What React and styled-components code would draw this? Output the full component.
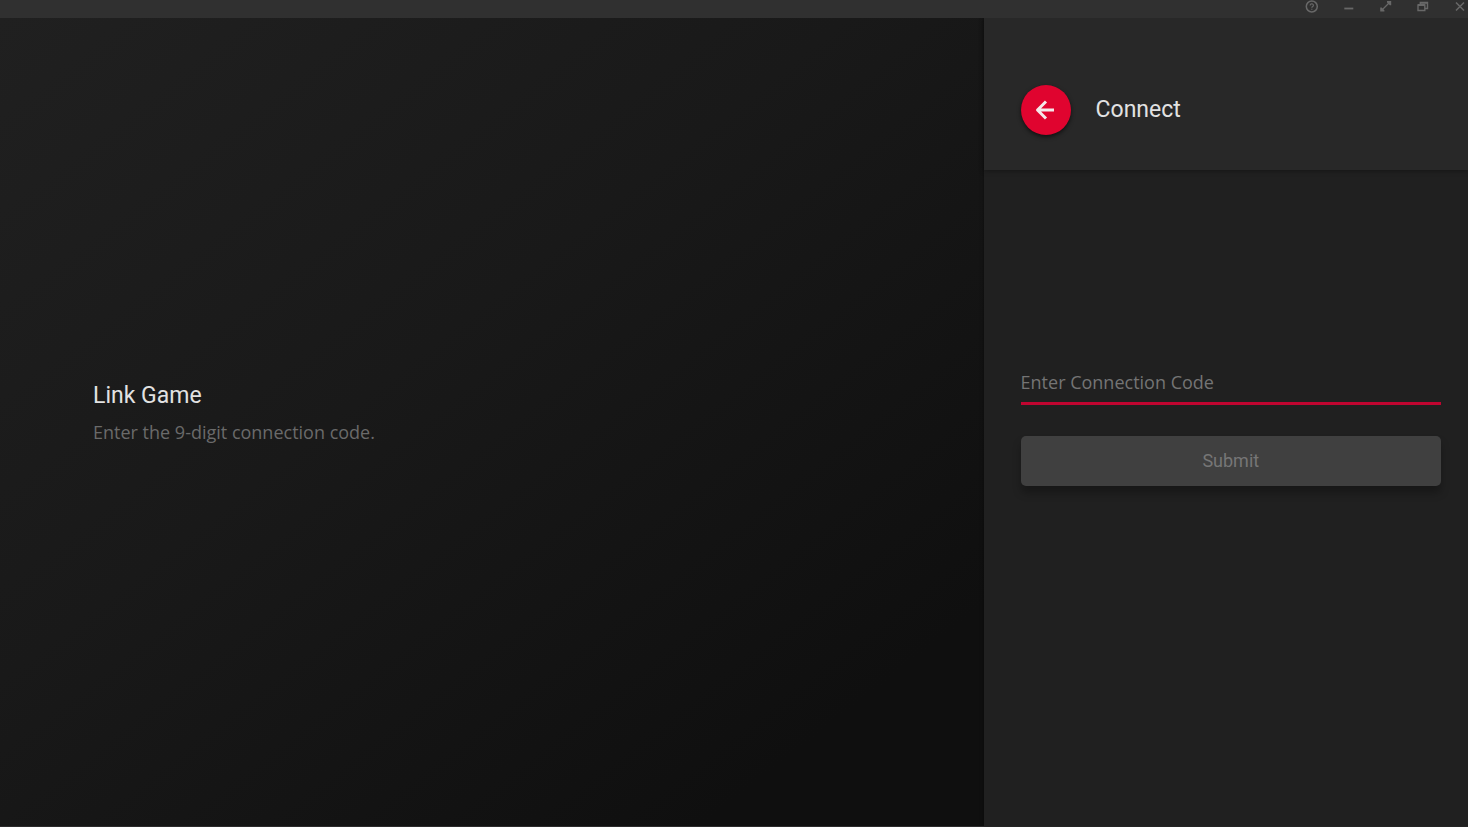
import React, { useState } from "react";
import styled, { createGlobalStyle } from "styled-components";

const GlobalStyle = createGlobalStyle`
  *, *::before, *::after { box-sizing: border-box; }
  body {
    margin: 0;
    background: #202020;
    color: #e2e2e2;
    font-family: "Open Sans", "Noto Sans", sans-serif;
  }
`;

const Page = styled.div`
  display: flex;
  flex-direction: column;
  min-height: 100vh;
  border-bottom: 1px solid #2c2b2c;
`;

const TitleBar = styled.header`
  position: relative;
  z-index: 1;
  display: flex;
  justify-content: flex-end;
  gap: 23px;
  height: 18px;
  padding-right: 1px;
  background: #303030;
`;

const WindowButton = styled.button`
  display: flex;
  align-items: center;
  justify-content: center;
  width: 14px;
  height: 13px;
  padding: 0;
  border: 0;
  background: none;
  color: #686868;
  cursor: pointer;
`;

const Columns = styled.div`
  display: flex;
  flex: 1;
`;

const Intro = styled.main`
  display: flex;
  flex: 1;
  flex-direction: column;
  justify-content: center;
  gap: 8px;
  padding: 0 24px 20px 93px;
  background: linear-gradient(142deg, #202020 0%, #191919 42%, #0f0f0f 86%, #0f0f0f 100%);
`;

const Heading = styled.h1`
  margin: 0;
  font: 400 23px/32px Roboto, sans-serif;
  color: #e2e2e2;
`;

const Description = styled.p`
  margin: 0;
  font-size: 18px;
  line-height: 24px;
  color: #6a6a6a;
`;

const Sidebar = styled.aside`
  display: flex;
  flex-direction: column;
  width: 33%;
  background: #202020;
  box-shadow: 0 0 4px rgba(0, 0, 0, 0.4);
`;

const SidebarHeader = styled.div`
  display: flex;
  align-items: center;
  gap: 25px;
  height: 152px;
  padding: 32px 37px 0;
  background: #282828;
  box-shadow: 0 1px 5px rgba(0, 0, 0, 0.35);
`;

const BackButton = styled.button`
  display: flex;
  align-items: center;
  justify-content: center;
  width: 50px;
  height: 50px;
  padding: 0;
  border: 0;
  border-radius: 50%;
  background: #e0042f;
  color: #f4e8ea;
  box-shadow: 0 2px 4px rgba(0, 0, 0, 0.6);
  cursor: pointer;
`;

const Form = styled.form`
  display: flex;
  flex: 1;
  flex-direction: column;
  justify-content: center;
  gap: 31px;
  padding: 0 27px 150px 37px;
`;

const CodeInput = styled.input`
  width: 100%;
  height: 44px;
  padding: 2px 0 0;
  border: 0;
  border-bottom: 3px solid #c00530;
  border-radius: 0;
  outline: 0;
  background: none;
  color: #e2e2e2;
  font: 400 18px/24px "Open Sans", "Noto Sans", sans-serif;

  &::placeholder {
    color: #747474;
    opacity: 1;
  }
`;

const SubmitButton = styled.button`
  height: 50px;
  padding: 0;
  border: 0;
  border-radius: 5px;
  background: ${({ disabled }) => (disabled ? "#404040" : "#e0042f")};
  color: ${({ disabled }) => (disabled ? "#767676" : "#ffffff")};
  font: 400 18px/24px Roboto, sans-serif;
  box-shadow: 0 7px 9px rgba(0, 0, 0, 0.28);
`;

const Icon = ({ width = 14, height = 13, children }) => (
  <svg
    width={width}
    height={height}
    viewBox={`0 0 ${width} ${height}`}
    fill="none"
    stroke="currentColor"
    aria-hidden="true"
  >
    {children}
  </svg>
);

const HelpIcon = () => (
  <Icon>
    <circle cx="6.8" cy="6.5" r="5.5" strokeWidth="1.5" />
    <path d="M5.2 5.4a1.6 1.5 0 1 1 2.500 1.200C7.100 7 6.800 7.200 6.800 7.800M6.800 8.800v1" strokeWidth="1.2" />
  </Icon>
);

const MinimizeIcon = () => (
  <Icon>
    <path d="M2.3 8.5h9" strokeWidth="1.8" />
  </Icon>
);

const ExpandIcon = () => (
  <Icon>
    <path d="M3.500 9.500l6.500-6.500" strokeWidth="1.300" />
    <path d="M8 1h4.200v4.200h-1.400L8 2.400zM1.200 7.400h1.400l2.800 2.800v1.400H1.200z" fill="currentColor" stroke="none" />
  </Icon>
);

const RestoreIcon = () => (
  <Icon>
    <path d="M2 5h6.800v5.500H2zM4.300 4.500v-2h7.200v6H9" strokeWidth="1.400" />
    <path d="M4 2.800h7.800M2 5h6.800" strokeWidth="1.800" />
  </Icon>
);

const CloseIcon = () => (
  <Icon>
    <path d="M3 2.500l8 8M11 2.500l-8 8" strokeWidth="1.500" />
  </Icon>
);

const ArrowLeftIcon = () => (
  <Icon width={24} height={24}>
    <path d="M20 12H4.500M12 3.500L3.500 12l8.500 8.500" strokeWidth="3" strokeLinejoin="round" />
  </Icon>
);

const windowControls = [
  { label: "Help", Glyph: HelpIcon },
  { label: "Minimize", Glyph: MinimizeIcon },
  { label: "Full screen", Glyph: ExpandIcon },
  { label: "Restore", Glyph: RestoreIcon },
  { label: "Close", Glyph: CloseIcon },
];

export default function App() {
  const [code, setCode] = useState("");

  return (
    <>
      <GlobalStyle />
      <Page>
        <TitleBar>
          {windowControls.map(({ label, Glyph }) => (
            <WindowButton key={label} type="button" aria-label={label}>
              <Glyph />
            </WindowButton>
          ))}
        </TitleBar>
        <Columns>
          <Intro>
            <Heading>Link Game</Heading>
            <Description>Enter the 9-digit connection code.</Description>
          </Intro>
          <Sidebar>
            <SidebarHeader>
              <BackButton type="button" aria-label="Back">
                <ArrowLeftIcon />
              </BackButton>
              <Heading as="h2">Connect</Heading>
            </SidebarHeader>
            <Form onSubmit={(event) => event.preventDefault()}>
              <CodeInput
                type="text"
                inputMode="numeric"
                maxLength={9}
                aria-label="Enter Connection Code"
                placeholder="Enter Connection Code"
                value={code}
                onChange={(event) => setCode(event.target.value)}
              />
              <SubmitButton type="submit" disabled={code.length !== 9}>
                Submit
              </SubmitButton>
            </Form>
          </Sidebar>
        </Columns>
      </Page>
    </>
  );
}
